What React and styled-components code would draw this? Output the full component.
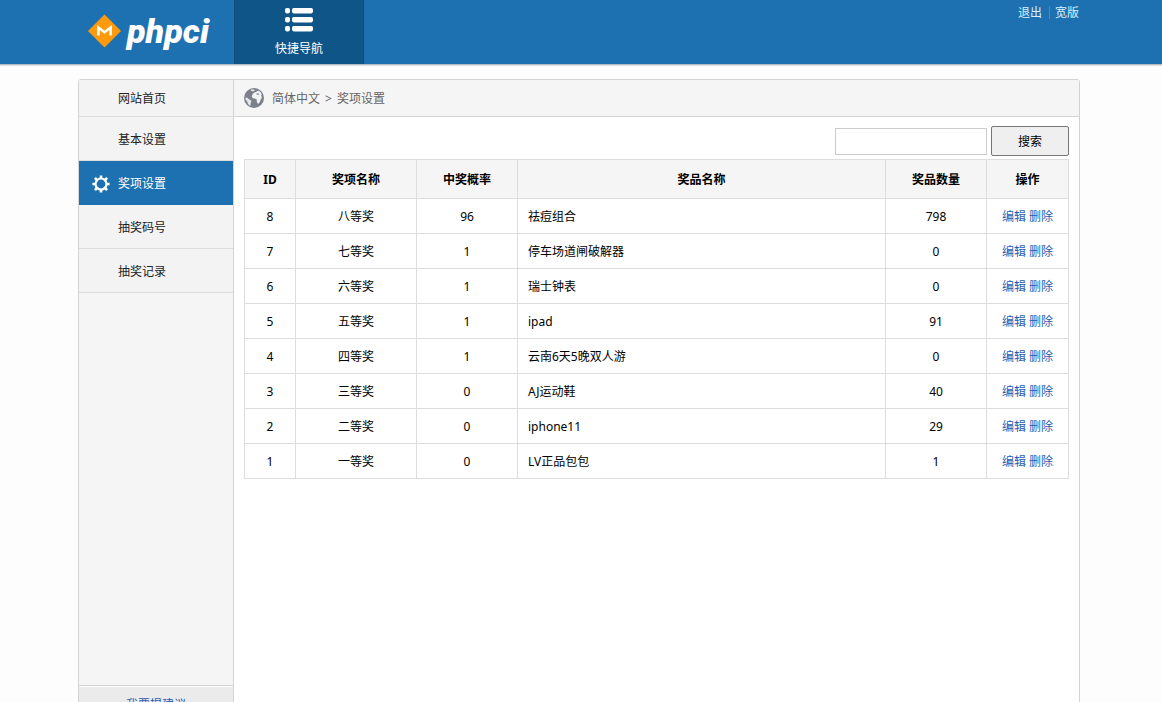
import React from 'react';
import styled, { createGlobalStyle } from 'styled-components';

const GlobalStyle = createGlobalStyle`
  * {
    box-sizing: border-box;
  }

  html {
    overflow-x: hidden;
    scrollbar-width: none;
  }

  body {
    margin: 0;
    background: #fdfdfd;
    color: #000;
    font-family: "Noto Sans", "Noto Sans CJK SC", sans-serif;
    font-size: 12px;
    line-height: 18px;
  }

  a {
    text-decoration: none;
  }
`;

const Header = styled.header`
  display: flex;
  height: 65px;
  padding: 0 82px 0 78px;
  background: #1e71b1;
  border-bottom: 1px solid #b4bcc4;
  box-shadow: 0 1px 1px #e4e4e4;
`;

const Logo = styled.a`
  display: flex;
  align-items: center;
  width: 156px;
  padding: 0 0 2px 10px;
  gap: 6px;
  color: #fff;
  font-family: Roboto, sans-serif;
  font-size: 34px;
  font-style: italic;
  font-weight: 900;
  line-height: 60px;
`;

const QuickNav = styled.button`
  display: flex;
  flex-direction: column;
  align-items: center;
  width: 130px;
  gap: 8px;
  padding: 8px 0 0;
  background: #105587;
  border: 1px solid #0e4d7c;
  border-width: 0 1px;
  color: #fff;
  font: inherit;
  cursor: pointer;
`;

const UserLinks = styled.nav`
  display: flex;
  align-items: flex-start;
  margin-left: auto;
  padding-top: 4px;
`;

const UserLink = styled.a`
  padding: 0 1px 0 6px;
  color: #d8f0ff;

  & + & {
    position: relative;
    margin-left: 6px;
  }

  & + &::before {
    content: "";
    position: absolute;
    top: 2px;
    left: 0;
    height: 13px;
    border-left: 1px solid #3d8ac4;
  }
`;

const Panel = styled.div`
  display: flex;
  margin: 14px 82px 0 78px;
  background: #fff;
  border: 1px solid #d3d3d3;
  border-radius: 3px 3px 0 0;
  overflow: hidden;
`;

const Sidebar = styled.aside`
  flex: 0 0 155px;
  background: #f5f5f5;
  border-right: 1px solid #d3d3d3;
`;

const Menu = styled.nav`
  display: flex;
  flex-direction: column;
  min-height: calc(100vh - 97px);
`;

const MenuLink = styled.a`
  display: flex;
  align-items: center;
  height: ${(props) => (props.$first ? '37px' : '44px')};
  gap: 8px;
  padding-top: 2px;
  padding-left: ${(props) => (props.$active ? '13px' : '39px')};
  background: ${(props) => (props.$active ? '#1e71b1' : '#f3f3f3')};
  border-bottom: 1px solid ${(props) => (props.$active ? '#1e71b1' : '#dcdcdc')};
  color: ${(props) => (props.$active ? '#fff' : '#222')};
`;

const SidebarFooter = styled.div`
  padding: 10px 0;
  background: #ebebeb;
  border-top: 1px solid #d3d3d3;
  box-shadow: inset 0 1px #fff;
  text-align: center;
`;

const BlueLink = styled.a`
  color: #2a5db0;

  & + & {
    margin-left: 3px;
  }
`;

const Main = styled.main`
  flex: 1;
  min-width: 0;
`;

const Breadcrumb = styled.div`
  display: flex;
  align-items: center;
  height: 37px;
  gap: 8px;
  padding-left: 10px;
  background: #f5f5f5;
  border-bottom: 1px solid #d3d3d3;
  color: #666;
`;

const Trail = styled.span`
  display: flex;
  gap: 5px;
  padding-top: 2px;
`;

const Content = styled.div`
  padding: 9px 10px;
`;

const SearchForm = styled.form`
  display: flex;
  align-items: center;
  justify-content: flex-end;
  gap: 4px;
  margin-bottom: 3px;
`;

const SearchInput = styled.input`
  width: 152px;
  height: 27px;
  padding: 0 4px;
  border: 1px solid #ccc;
  font: inherit;
`;

const SearchButton = styled.button`
  width: 78px;
  height: 30px;
  padding: 2px 0 0;
  background: #efefef;
  border: 1px solid #767676;
  border-radius: 2px;
  color: #000;
  font: inherit;
`;

const Table = styled.table`
  width: 100%;
  table-layout: fixed;
  border-collapse: collapse;
`;

const HeadCell = styled.th`
  width: ${(props) => props.$width || 'auto'};
  height: 39px;
  padding: 2px 0 0;
  background: #f5f5f5;
  border: 1px solid #ddd;
  font-weight: 700;
`;

const Cell = styled.td`
  height: 35px;
  padding: 2px 10px 0;
  border: 1px solid #ddd;
  text-align: ${(props) => (props.$left ? 'left' : 'center')};
  white-space: nowrap;
`;

const menu = ['网站首页', '基本设置', '奖项设置', '抽奖码号', '抽奖记录'];

const prizes = [
  { id: 8, level: '八等奖', rate: 96, name: '祛痘组合', count: 798 },
  { id: 7, level: '七等奖', rate: 1, name: '停车场道闸破解器', count: 0 },
  { id: 6, level: '六等奖', rate: 1, name: '瑞士钟表', count: 0 },
  { id: 5, level: '五等奖', rate: 1, name: 'ipad', count: 91 },
  { id: 4, level: '四等奖', rate: 1, name: '云南6天5晚双人游', count: 0 },
  { id: 3, level: '三等奖', rate: 0, name: 'AJ运动鞋', count: 40 },
  { id: 2, level: '二等奖', rate: 0, name: 'iphone11', count: 29 },
  { id: 1, level: '一等奖', rate: 0, name: 'LV正品包包', count: 1 },
];

function LogoMark() {
  return (
    <svg width="33" height="34" viewBox="0 0 33 34" aria-hidden="true">
      <path d="M16.5 0.5 33 17 16.5 33.5 0 17Z" fill="#ff9a0c" />
      <path d="M10.4 21.6V13.6L16.5 18.2 22.6 13.6V21.6" fill="none" stroke="#fff" strokeWidth="2.5" />
    </svg>
  );
}

function ListIcon() {
  return (
    <svg width="28" height="24" viewBox="0 0 28 24" fill="#fff" aria-hidden="true">
      {[0, 9, 18].map((y) => (
        <g key={y}>
          <rect x="0" y={y} width="5" height="5.4" rx="1.8" />
          <rect x="7" y={y} width="21" height="5.4" rx="1.8" />
        </g>
      ))}
    </svg>
  );
}

function GearIcon() {
  return (
    <svg width="18" height="18" viewBox="0 0 18 18" fill="none" stroke="#fff" aria-hidden="true">
      <circle cx="9" cy="9" r="5.5" strokeWidth="2.2" />
      {[0, 45, 90, 135, 180, 225, 270, 315].map((a) => (
        <path key={a} d="M9 3V0.4" strokeWidth="2.6" transform={`rotate(${a} 9 9)`} />
      ))}
    </svg>
  );
}

function GlobeIcon() {
  return (
    <svg width="20" height="20" viewBox="0 0 20 20" aria-hidden="true">
      <circle cx="10" cy="10" r="10" fill="#7c808b" />
      <path d="M6.4 1.6 9.6 1.2 11 2.2 9.2 3.4 7.4 3Z" fill="#dfe1e5" />
      <path d="M1.4 9.4 3.2 9.8 5.4 11.6 7.4 12.8 6.8 15 6.2 18 4 16 3.2 13.4 1.6 11.8Z" fill="#e4e6e9" />
      <path d="M8.6 6.2 10.4 4.4 12.6 3.8 14.2 2.6 16.4 4 17.8 6.4 17 7.6 18 9.6 16.8 11.2 15.8 14 14.2 16 12.8 14 12.8 11.4 10.8 10.6 8.8 10.2 7.8 8.4Z" fill="#f3f4f6" />
      <path d="M12 5.8 14.4 5.2 15.4 6.4 13 6.8Z" fill="#7c808b" />
    </svg>
  );
}

function App() {
  return (
    <>
      <GlobalStyle />
      <Header>
        <Logo href="#home">
          <LogoMark />
          phpci
        </Logo>
        <QuickNav type="button">
          <ListIcon />
          快捷导航
        </QuickNav>
        <UserLinks>
          <UserLink href="#logout">退出</UserLink>
          <UserLink href="#wide">宽版</UserLink>
        </UserLinks>
      </Header>
      <Panel>
        <Sidebar>
          <Menu>
            {menu.map((item, index) => (
              <MenuLink key={item} href={`#menu-${index}`} $first={index === 0} $active={item === '奖项设置'}>
                {item === '奖项设置' && <GearIcon />}
                {item}
              </MenuLink>
            ))}
          </Menu>
          <SidebarFooter>
            <BlueLink href="#feedback">我要提建议</BlueLink>
          </SidebarFooter>
        </Sidebar>
        <Main>
          <Breadcrumb>
            <GlobeIcon />
            <Trail>
              <span>简体中文</span>
              <span>&gt;</span>
              <span>奖项设置</span>
            </Trail>
          </Breadcrumb>
          <Content>
            <SearchForm>
              <SearchInput type="text" aria-label="搜索" />
              <SearchButton type="button">搜索</SearchButton>
            </SearchForm>
            <Table>
              <thead>
                <tr>
                  <HeadCell $width="51px">ID</HeadCell>
                  <HeadCell $width="121px">奖项名称</HeadCell>
                  <HeadCell $width="101px">中奖概率</HeadCell>
                  <HeadCell>奖品名称</HeadCell>
                  <HeadCell $width="101px">奖品数量</HeadCell>
                  <HeadCell $width="82px">操作</HeadCell>
                </tr>
              </thead>
              <tbody>
                {prizes.map((prize) => (
                  <tr key={prize.id}>
                    <Cell>{prize.id}</Cell>
                    <Cell>{prize.level}</Cell>
                    <Cell>{prize.rate}</Cell>
                    <Cell $left>{prize.name}</Cell>
                    <Cell>{prize.count}</Cell>
                    <Cell>
                      <BlueLink href={`#edit-${prize.id}`}>编辑</BlueLink>
                      <BlueLink href={`#delete-${prize.id}`}>删除</BlueLink>
                    </Cell>
                  </tr>
                ))}
              </tbody>
            </Table>
          </Content>
        </Main>
      </Panel>
    </>
  );
}

export default App;
